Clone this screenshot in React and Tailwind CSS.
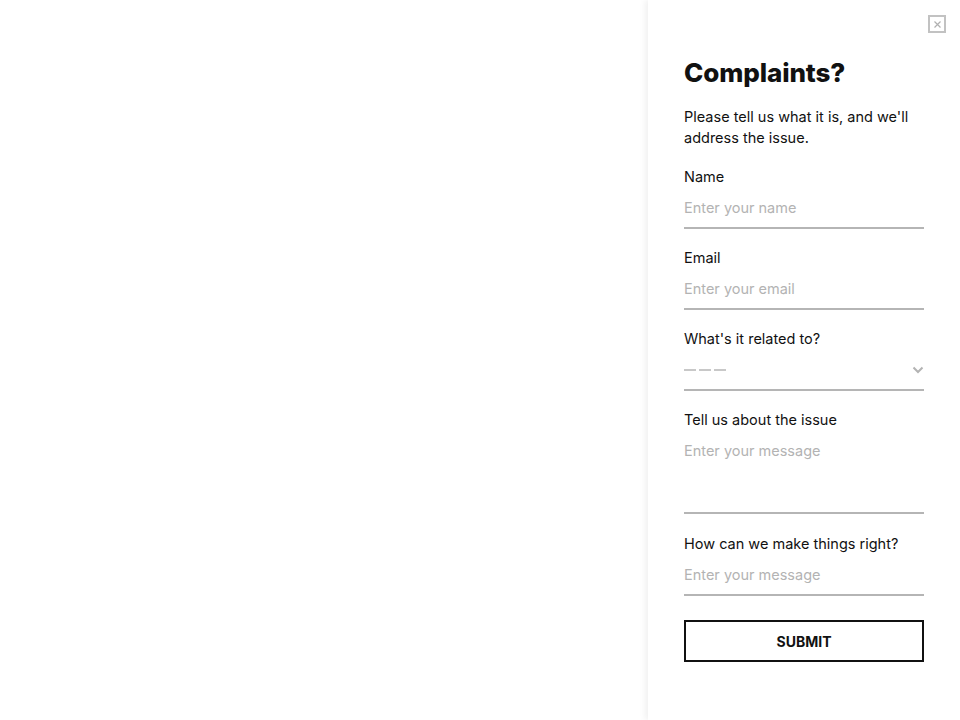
import React from "react";

function Field({ label, placeholder }) {
  return (
    <div className="flex flex-col mb-[19px]">
      <label className="text-[14.5px] leading-[20px] text-[#111]">{label}</label>
      <input
        className="h-[42px] pt-[1px] border-b-2 border-[#b5b5b5] outline-none text-[14.5px] placeholder:text-[#b3b3b3] bg-transparent"
        placeholder={placeholder}
      />
    </div>
  );
}

export default function App() {
  return (
    <div
      className="w-[960px] h-[720px] bg-white flex justify-end overflow-hidden"
      style={{ fontFamily: "Inter, 'Noto Sans', sans-serif" }}
    >
      <div className="w-[312px] h-full bg-white shadow-[-3px_0_6px_rgba(0,0,0,0.06)] relative px-[36px] pt-[56px]">
        <button className="absolute top-[15px] right-[14px] w-[18px] h-[18px] border-2 border-[#c2c2c2] flex items-center justify-center">
          <svg width="7" height="7" viewBox="0 0 7 7">
            <path d="M0.5 0.5L6.5 6.5M6.5 0.5L0.5 6.5" stroke="#b0b0b0" strokeWidth="1.2" />
          </svg>
        </button>
        <h1 className="text-[26px] leading-[34px] font-extrabold text-[#111] tracking-[-0.1px]">Complaints?</h1>
        <p className="mt-[16px] text-[14.5px] leading-[21px] text-[#111]">
          Please tell us what it is, and we'll address the issue.
        </p>
        <div className="mt-[19px]">
          <Field label="Name" placeholder="Enter your name" />
          <Field label="Email" placeholder="Enter your email" />
          <div className="flex flex-col mb-[19px]">
            <label className="text-[14.5px] leading-[20px] text-[#111]">What's it related to?</label>
            <div className="h-[42px] pt-[2px] border-b-2 border-[#b5b5b5] flex items-center justify-between">
              <div className="flex gap-[3px]">
                <span className="w-[12px] h-[1.5px] bg-[#c8c8c8]" />
                <span className="w-[12px] h-[1.5px] bg-[#c8c8c8]" />
                <span className="w-[12px] h-[1.5px] bg-[#c8c8c8]" />
              </div>
              <svg width="12" height="8" viewBox="0 0 12 8">
                <path d="M1.5 1.5L6 6L10.5 1.5" stroke="#b3b3b3" strokeWidth="2" fill="none" />
              </svg>
            </div>
          </div>
          <div className="flex flex-col mb-[20px]">
            <label className="text-[14.5px] leading-[20px] text-[#111]">Tell us about the issue</label>
            <textarea
              className="h-[84px] pt-[11px] leading-[20px] resize-none border-b-2 border-[#b5b5b5] outline-none text-[14.5px] placeholder:text-[#b3b3b3]"
              placeholder="Enter your message"
            />
          </div>
          <Field label="How can we make things right?" placeholder="Enter your message" />
          <button className="mt-[5px] w-full h-[42px] border-2 border-[#111] text-[14px] font-bold text-[#111]">
            SUBMIT
          </button>
        </div>
      </div>
    </div>
  );
}
